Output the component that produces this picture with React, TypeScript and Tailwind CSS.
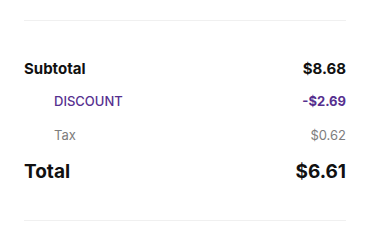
export default function App() {
  return (
    <div className="w-[370px] h-[245px] bg-white px-6 pt-5 font-['Inter',sans-serif] text-[#111111]">
      <div className="border-t border-b border-[#f0f0f0] pt-[38px] pb-[34px]">
        <div className="flex items-center justify-between h-5 text-[15px] font-bold">
          <span>Subtotal</span>
          <span>$8.68</span>
        </div>
        <div className="mt-[13px] flex items-center justify-between h-5 pl-[30px] text-[13px] font-medium text-[#56308f]">
          <span>DISCOUNT</span>
          <span className="font-bold">-$2.69</span>
        </div>
        <div className="mt-[14px] flex items-center justify-between h-5 pl-[30px] text-[13px] text-[#7d7d7d]">
          <span>Tax</span>
          <span>$0.62</span>
        </div>
        <div className="mt-[12px] flex items-center justify-between h-7 text-[19px] font-bold">
          <span>Total</span>
          <span>$6.61</span>
        </div>
      </div>
    </div>
  );
}
